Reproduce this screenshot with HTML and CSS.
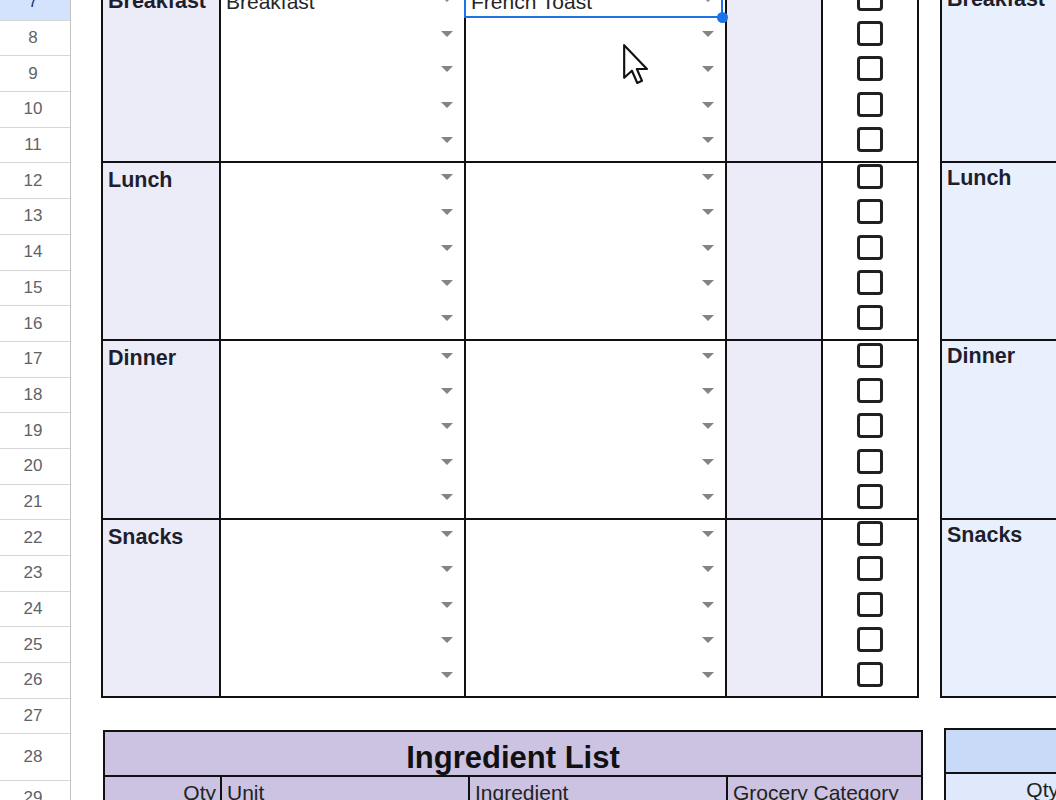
FILE: index.html
```html
<!DOCTYPE html>
<html>
<head>
<meta charset="utf-8">
<link rel="stylesheet" href="styles.css">
</head>
<body>
<div class="app">
  <div class="rowheads">
    <div class="rh sel">7</div>
    <div class="rh">8</div>
    <div class="rh">9</div>
    <div class="rh">10</div>
    <div class="rh">11</div>
    <div class="rh">12</div>
    <div class="rh">13</div>
    <div class="rh">14</div>
    <div class="rh">15</div>
    <div class="rh">16</div>
    <div class="rh">17</div>
    <div class="rh">18</div>
    <div class="rh">19</div>
    <div class="rh">20</div>
    <div class="rh">21</div>
    <div class="rh">22</div>
    <div class="rh">23</div>
    <div class="rh">24</div>
    <div class="rh">25</div>
    <div class="rh">26</div>
    <div class="rh">27</div>
    <div class="rh tall">28</div>
    <div class="rh">29</div>
  </div>

  <div class="canvas">
    <div class="top">
      <div class="plan">
        <!-- Breakfast -->
        <div class="meal">Breakfast</div>
        <div class="dd">
          <div class="ddrow"><span class="val">Breakfast</span><i class="arrow"></i></div>
          <div class="ddrow"><i class="arrow"></i></div>
          <div class="ddrow"><i class="arrow"></i></div>
          <div class="ddrow"><i class="arrow"></i></div>
          <div class="ddrow"><i class="arrow"></i></div>
        </div>
        <div class="dd">
          <div class="ddrow"><span class="val">French Toast</span><i class="arrow"></i><div class="selbox"><span class="handle"></span></div></div>
          <div class="ddrow"><i class="arrow"></i></div>
          <div class="ddrow"><i class="arrow"></i></div>
          <div class="ddrow"><i class="arrow"></i></div>
          <div class="ddrow"><i class="arrow"></i></div>
        </div>
        <div class="note"></div>
        <div class="checks">
          <div class="ck"><span class="box"></span></div>
          <div class="ck"><span class="box"></span></div>
          <div class="ck"><span class="box"></span></div>
          <div class="ck"><span class="box"></span></div>
          <div class="ck"><span class="box"></span></div>
        </div>

        <!-- Lunch -->
        <div class="meal">Lunch</div>
        <div class="dd">
          <div class="ddrow"><i class="arrow"></i></div>
          <div class="ddrow"><i class="arrow"></i></div>
          <div class="ddrow"><i class="arrow"></i></div>
          <div class="ddrow"><i class="arrow"></i></div>
          <div class="ddrow"><i class="arrow"></i></div>
        </div>
        <div class="dd">
          <div class="ddrow"><i class="arrow"></i></div>
          <div class="ddrow"><i class="arrow"></i></div>
          <div class="ddrow"><i class="arrow"></i></div>
          <div class="ddrow"><i class="arrow"></i></div>
          <div class="ddrow"><i class="arrow"></i></div>
        </div>
        <div class="note"></div>
        <div class="checks">
          <div class="ck"><span class="box"></span></div>
          <div class="ck"><span class="box"></span></div>
          <div class="ck"><span class="box"></span></div>
          <div class="ck"><span class="box"></span></div>
          <div class="ck"><span class="box"></span></div>
        </div>

        <!-- Dinner -->
        <div class="meal">Dinner</div>
        <div class="dd">
          <div class="ddrow"><i class="arrow"></i></div>
          <div class="ddrow"><i class="arrow"></i></div>
          <div class="ddrow"><i class="arrow"></i></div>
          <div class="ddrow"><i class="arrow"></i></div>
          <div class="ddrow"><i class="arrow"></i></div>
        </div>
        <div class="dd">
          <div class="ddrow"><i class="arrow"></i></div>
          <div class="ddrow"><i class="arrow"></i></div>
          <div class="ddrow"><i class="arrow"></i></div>
          <div class="ddrow"><i class="arrow"></i></div>
          <div class="ddrow"><i class="arrow"></i></div>
        </div>
        <div class="note"></div>
        <div class="checks">
          <div class="ck"><span class="box"></span></div>
          <div class="ck"><span class="box"></span></div>
          <div class="ck"><span class="box"></span></div>
          <div class="ck"><span class="box"></span></div>
          <div class="ck"><span class="box"></span></div>
        </div>

        <!-- Snacks -->
        <div class="meal">Snacks</div>
        <div class="dd">
          <div class="ddrow"><i class="arrow"></i></div>
          <div class="ddrow"><i class="arrow"></i></div>
          <div class="ddrow"><i class="arrow"></i></div>
          <div class="ddrow"><i class="arrow"></i></div>
          <div class="ddrow"><i class="arrow"></i></div>
        </div>
        <div class="dd">
          <div class="ddrow"><i class="arrow"></i></div>
          <div class="ddrow"><i class="arrow"></i></div>
          <div class="ddrow"><i class="arrow"></i></div>
          <div class="ddrow"><i class="arrow"></i></div>
          <div class="ddrow"><i class="arrow"></i></div>
        </div>
        <div class="note"></div>
        <div class="checks">
          <div class="ck"><span class="box"></span></div>
          <div class="ck"><span class="box"></span></div>
          <div class="ck"><span class="box"></span></div>
          <div class="ck"><span class="box"></span></div>
          <div class="ck"><span class="box"></span></div>
        </div>
      </div>

      <div class="plan2">
        <div class="meal2">Breakfast</div>
        <div class="meal2">Lunch</div>
        <div class="meal2">Dinner</div>
        <div class="meal2">Snacks</div>
      </div>
    </div>

    <div class="ing">
      <div class="ingL">
        <div class="ingtitle">Ingredient List</div>
        <div class="inghead">
          <div class="qty">Qty</div>
          <div>Unit</div>
          <div>Ingredient</div>
          <div class="last">Grocery Category</div>
        </div>
      </div>
      <div class="ingR">
        <div class="ingtitle2"></div>
        <div class="inghead2">
          <div class="qty">Qty</div>
          <div></div>
        </div>
      </div>
    </div>
  </div>
</div>

<svg class="cursor" width="28" height="43" viewBox="0 0 13 20">
  <path d="M1 1 L1 16.2 L4.6 12.9 L7.1 18.6 L9.3 17.6 L6.9 12.1 L11.6 12.1 Z" fill="#fff" stroke="#111" stroke-width="1" stroke-linejoin="round"/>
</svg>
</body>
</html>
```

FILE: styles.css
```css
* { box-sizing: border-box; }
html, body { margin: 0; padding: 0; }
body {
  width: 1056px;
  height: 800px;
  overflow: hidden;
  background: #ffffff;
  font-family: "Liberation Sans", Arial, sans-serif;
  position: relative;
  color: #202124;
}

.app {
  display: flex;
  margin-top: -15px;
}

.rowheads {
  width: 71px;
  flex: none;
  border-right: 1px solid #c4c4c4;
}
.rh {
  height: 35.7px;
  border-bottom: 1px solid #d6d6d6;
  display: flex;
  align-items: center;
  justify-content: center;
  font-size: 17px;
  color: #5f6368;
  padding-right: 4px;
}
.rh.sel { background: #d3e3fd; color: #1f3a6b; }
.rh.tall { height: 46.3px; }

.canvas {
  margin-left: 30px;
  margin-top: -3px;
  flex: 1;
  min-width: 0;
}

.top {
  display: flex;
  gap: 21px;
}

.plan {
  flex: none;
  display: grid;
  grid-template-columns: 118px 245px 261px 96px 96px;
  grid-auto-rows: 178.5px;
  border-left: 2px solid #111;
  border-top: 2px solid #111;
}
.plan > div {
  border-right: 2px solid #111;
  border-bottom: 2px solid #111;
}

.meal {
  background: #ecebf8;
  padding: 5px 5px;
  font-weight: bold;
  font-size: 21.5px;
  color: #1e1e2c;
}
.note { background: #ecebf8; }

.dd {
  display: flex;
  flex-direction: column;
}
.ddrow {
  flex: 1;
  position: relative;
  display: flex;
  align-items: center;
  padding: 0 11px 0 5px;
  font-size: 21px;
  color: #262626;
}
.val { white-space: nowrap; }
.arrow {
  margin-left: auto;
  margin-top: -6px;
  width: 0;
  height: 0;
  border-left: 6.5px solid transparent;
  border-right: 6.5px solid transparent;
  border-top: 6px solid #848484;
}

.selbox {
  position: absolute;
  left: -2px;
  right: 2px;
  top: -22px;
  bottom: 1px;
  border: 2px solid #1a73e8;
}
.handle {
  position: absolute;
  right: -7px;
  bottom: -7px;
  width: 11px;
  height: 11px;
  border-radius: 50%;
  background: #1a73e8;
}

.checks {
  display: flex;
  flex-direction: column;
}
.ck {
  flex: 1;
  display: flex;
  align-items: center;
  justify-content: center;
}
.box {
  width: 26px;
  height: 25px;
  margin-top: -7px;
  border: 3px solid #202020;
  border-radius: 4px;
  background: #fff;
}

.plan2 {
  flex: 1;
  min-width: 0;
  border-left: 2px solid #111;
  border-top: 2px solid #111;
  display: flex;
  flex-direction: column;
}
.meal2 {
  height: 178.5px;
  border-bottom: 2px solid #111;
  background: #e8f0fe;
  padding: 3px 5px;
  font-weight: bold;
  font-size: 21.5px;
  color: #1e1e2c;
}

.ing {
  display: flex;
  gap: 21px;
  margin-top: 32px;
}
.ingL {
  flex: none;
  width: 820px;
  margin-left: 2px;
  border: 2px solid #111;
  border-bottom: none;
  background: #cbc3e1;
}
.ingtitle {
  height: 45px;
  border-bottom: 2px solid #111;
  text-align: center;
  font-weight: bold;
  font-size: 31px;
  line-height: 43px;
  padding-top: 4px;
  color: #111;
}
.inghead {
  display: grid;
  grid-template-columns: 117px 248px 258px 1fr;
  height: 40px;
}
.inghead > div {
  border-right: 2px solid #111;
  padding: 4px 5px;
  font-size: 21px;
  white-space: nowrap;
  overflow: hidden;
  color: #222;
}
.inghead > div.last { border-right: none; }
.inghead .qty { text-align: right; padding-right: 4px; }

.ingR {
  flex: 1;
  min-width: 0;
  margin-top: -2px;
  border-left: 2px solid #111;
  border-top: 2px solid #111;
  background: #c9daf8;
}
.ingtitle2 {
  height: 44px;
  border-bottom: 2px solid #111;
}
.inghead2 {
  display: grid;
  grid-template-columns: 119px 1fr;
  height: 40px;
  background: #dfe9fb;
}
.inghead2 > div {
  padding: 4px 4px;
  font-size: 21px;
  white-space: nowrap;
  color: #222;
}
.inghead2 .qty { text-align: right; border-right: 2px solid #111; }

.cursor {
  position: absolute;
  left: 622px;
  top: 43px;
}
```
